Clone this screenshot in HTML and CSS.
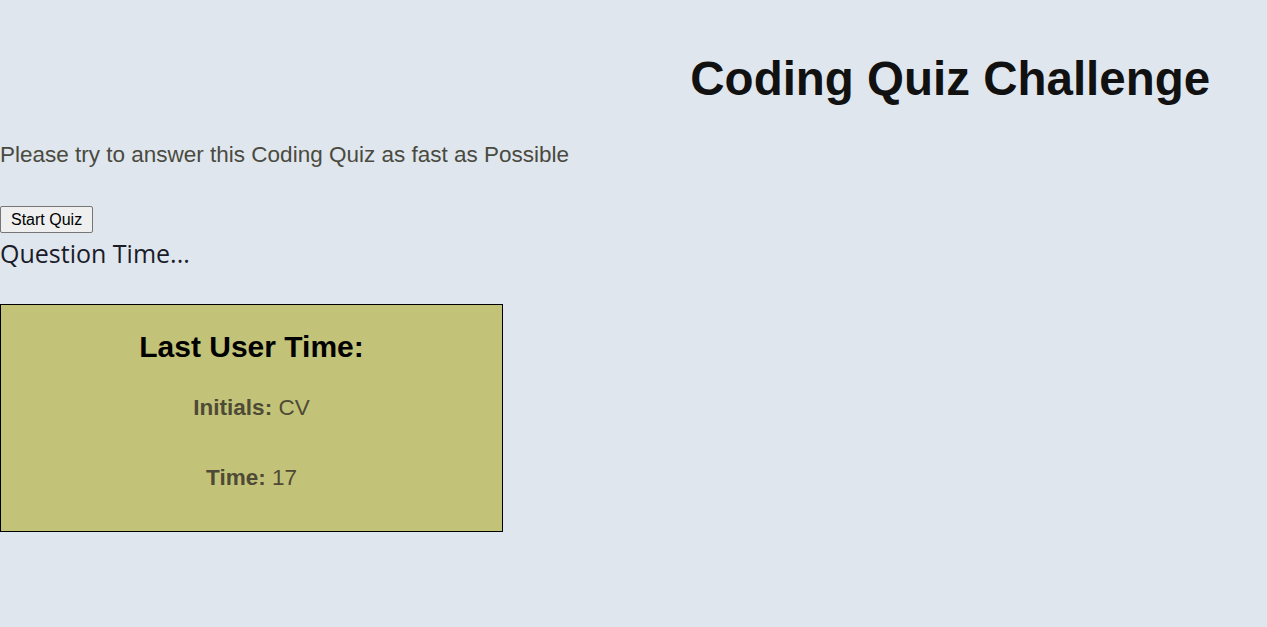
FILE: index.html
```html
<!DOCTYPE html>
<html>
<head>
<meta charset="utf-8">
<link rel="stylesheet" href="styles.css">
</head>
<body>
<header class="top">
  <div class="spacer"></div>
  <h1 class="title">Coding Quiz Challenge</h1>
</header>
<p class="intro">Please try to answer this Coding Quiz as fast as Possible</p>
<button class="start">Start Quiz</button>
<div class="question">Question Time...</div>
<section class="last">
  <h2 class="last-title">Last User Time:</h2>
  <p class="stat"><strong>Initials:</strong> CV</p>
  <p class="stat"><strong>Time:</strong> 17</p>
</section>
</body>
</html>
```

FILE: styles.css
```css
html, body {
  margin: 0;
  padding: 0;
  background: #dfe6ed;
}
body {
  font-family: "Liberation Sans", Arial, sans-serif;
}
.top {
  display: grid;
  grid-template-columns: 1fr 1fr;
  padding-top: 19px;
}
.title {
  margin: 32px 0 0 0;
  text-align: center;
  font-size: 47.5px;
  font-weight: bold;
  color: #111;
  line-height: 55px;
}
.intro {
  margin: 36px 0 0 0;
  font-size: 22.5px;
  color: #4a4a40;
}
.start {
  margin-top: 38px;
  font-family: "Liberation Sans", Arial, sans-serif;
  font-size: 16px;
  line-height: 19px;
  padding: 3px 10px;
  background: #efefef;
  border: 1px solid #767676;
  border-radius: 2px;
  color: #000;
  display: block;
}
.question {
  font-family: "Open Sans", sans-serif;
  font-size: 25px;
  color: #1a1c2a;
  margin-top: 3px;
}
.last {
  margin-top: 34px;
  width: 501px;
  height: 226px;
  background: #c2c378;
  border: 1px solid #000;
  text-align: center;
}
.last-title {
  margin: 25px 0 0 0;
  font-size: 30px;
  color: #000;
}
.stat {
  margin: 0;
  font-size: 22.5px;
  color: #4e4a36;
}
.stat:nth-of-type(1) { margin-top: 31px; }
.stat:nth-of-type(2) { margin-top: 44px; }
```
